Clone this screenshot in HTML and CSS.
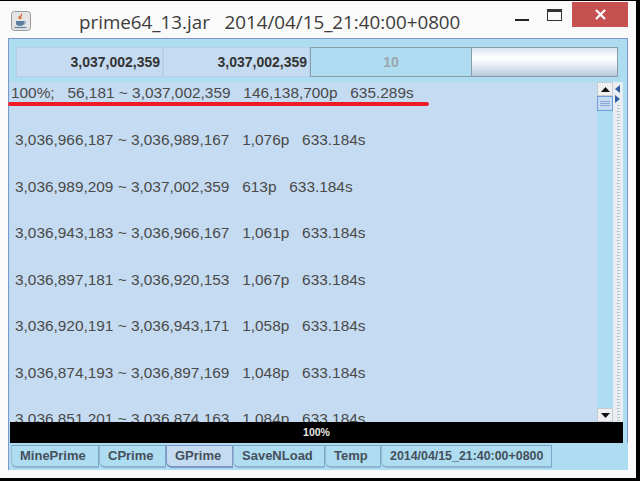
FILE: index.html
```html
<!DOCTYPE html>
<html>
<head>
<meta charset="utf-8">
<title>prime64_13.jar</title>
<link rel="stylesheet" href="styles.css">
</head>
<body>
<div class="window">
  <header class="titlebar">
    <div class="appicon">
      <svg width="20" height="20" viewBox="0 0 20 20">
        <rect x="0.5" y="0.5" width="19" height="19" rx="3" fill="#e4e4e4" stroke="#9a9a9a"/>
        <path d="M10 3c2 2-2 3 0 5M8 5c1 2 0 2 0 3" fill="none" stroke="#d8662a" stroke-width="1.3"/>
        <path d="M5 10h8v2c0 2-1 3-4 3s-4-1-4-3z" fill="#5b7fa0"/>
        <path d="M13 10.500c2 0 2 2.500-.5 2.500" fill="none" stroke="#5b7fa0"/>
        <path d="M3.500 16.500h12" stroke="#5b7fa0" stroke-width="1.200"/>
      </svg>
    </div>
    <div class="title">prime64_13.jar&nbsp;&nbsp;&nbsp;2014/04/15_21:40:00+0800</div>
    <div class="controls">
      <span class="min"></span>
      <span class="max"></span>
      <span class="close">
        <svg width="11" height="11" viewBox="0 0 11 11"><path d="M1 1l9 9M10 1l-9 9" stroke="#fff" stroke-width="2.200"/></svg>
      </span>
    </div>
  </header>
  <main class="pane">
    <div class="toprow">
      <div class="cell num">3,037,002,359</div>
      <div class="cell num">3,037,002,359</div>
      <div class="cell field">10</div>
      <div class="cell button"></div>
    </div>
    <div class="summary">100%;&nbsp;&nbsp;&nbsp;56,181 ~ 3,037,002,359&nbsp;&nbsp;&nbsp;146,138,700p&nbsp;&nbsp;&nbsp;635.289s<span class="redline"></span></div>
    <div class="middle">
      <div class="list">
        <div class="row">3,036,966,187 ~ 3,036,989,167&nbsp;&nbsp;&nbsp;1,076p&nbsp;&nbsp;&nbsp;633.184s</div>
        <div class="row">3,036,989,209 ~ 3,037,002,359&nbsp;&nbsp;&nbsp;613p&nbsp;&nbsp;&nbsp;633.184s</div>
        <div class="row">3,036,943,183 ~ 3,036,966,167&nbsp;&nbsp;&nbsp;1,061p&nbsp;&nbsp;&nbsp;633.184s</div>
        <div class="row">3,036,897,181 ~ 3,036,920,153&nbsp;&nbsp;&nbsp;1,067p&nbsp;&nbsp;&nbsp;633.184s</div>
        <div class="row">3,036,920,191 ~ 3,036,943,171&nbsp;&nbsp;&nbsp;1,058p&nbsp;&nbsp;&nbsp;633.184s</div>
        <div class="row">3,036,874,193 ~ 3,036,897,169&nbsp;&nbsp;&nbsp;1,048p&nbsp;&nbsp;&nbsp;633.184s</div>
        <div class="row">3,036,851,201 ~ 3,036,874,163&nbsp;&nbsp;&nbsp;1,084p&nbsp;&nbsp;&nbsp;633.184s</div>
      </div>
      <div class="scrollbar">
        <div class="sbtn"><svg width="9" height="5" viewBox="0 0 9 5"><path d="M4.500 0L9 5H0z" fill="#111"/></svg></div>
        <div class="thumb"><i></i><i></i><i></i></div>
        <div class="track"></div>
        <div class="sbtn"><svg width="9" height="5" viewBox="0 0 9 5"><path d="M4.500 5L9 0H0z" fill="#111"/></svg></div>
      </div>
      <div class="splitter">
        <svg width="6" height="8" viewBox="0 0 6 8"><path d="M5 0v8L0 4z" fill="#2f5f9e"/></svg>
        <svg width="6" height="8" viewBox="0 0 6 8"><path d="M0 0v8l5-4z" fill="#2f5f9e"/></svg>
        <div class="dots"></div>
      </div>
    </div>
    <div class="progress">100%</div>
  </main>
  <nav class="tabs">
    <div class="tab t1">MinePrime</div>
    <div class="tab t2">CPrime</div>
    <div class="tab t3 active">GPrime</div>
    <div class="tab t4">SaveNLoad</div>
    <div class="tab t5">Temp</div>
    <div class="tab t6">2014/04/15_21:40:00+0800</div>
  </nav>
</div>
</body>
</html>
```
FILE: styles.css
```css
html, body {
  margin: 0;
  padding: 0;
  width: 640px;
  height: 481px;
  overflow: hidden;
  background: #000;
}
.window {
  box-sizing: border-box;
  width: 636px;
  height: 477px;
  margin-top: 1px;
  background: #fafafa;
  padding: 0 8px 8px 8px;
  display: flex;
  flex-direction: column;
  font-family: "Liberation Sans", Arial, sans-serif;
  color: #444;
}
.titlebar {
  height: 37px;
  flex: none;
  display: flex;
  align-items: flex-start;
  position: relative;
}
.appicon {
  margin: 10px 0 0 3px;
  width: 20px;
  height: 20px;
}
.title {
  margin: 8px 0 0 48px;
  font-family: "Open Sans", sans-serif;
  font-size: 18.800px;
  line-height: 26px;
  color: #3c3c3c;
  white-space: nowrap;
}
.controls {
  margin-left: auto;
  display: flex;
  align-items: flex-start;
}
.min {
  width: 14px;
  height: 2px;
  background: #222;
  margin: 18px 18px 0 0;
}
.max {
  box-sizing: border-box;
  width: 15px;
  height: 12px;
  border: 1px solid #333;
  border-top-width: 3px;
  margin: 8px 10px 0 0;
}
.close {
  width: 56px;
  height: 25px;
  background: #c75050;
  margin-top: 1px;
  display: flex;
  align-items: center;
  justify-content: center;
}
.pane {
  flex: none;
  height: 405px;
  box-sizing: border-box;
  border: 1px solid #7d97c9;
  border-bottom: 0;
  background: #aedcf0;
  padding: 8px 4px 0 1px;
  display: flex;
  flex-direction: column;
  width: 620px;
}
.toprow {
  display: flex;
  height: 30px;
  flex: none;
  padding-left: 6px;
  padding-right: 5px;
}
.cell {
  box-sizing: border-box;
  height: 30px;
  font-size: 14px;
  font-weight: 700;
  line-height: 28px;
}
.num {
  width: 147px;
  background: #c5dbf1;
  border: 1px solid #b7d0e8;
  text-align: right;
  padding-right: 2px;
  color: #333;
}
.field {
  width: 162px;
  background: #aedcf0;
  border: 1px solid #8a9aa8;
  text-align: center;
  color: #9aa6ae;
}
.button {
  flex: 1;
  border: 1px solid #8a9aa8;
  border-left: 0;
  background: linear-gradient(#d8e4f0, #ffffff 35%, #e8eff6 60%, #b8cadc);
}
.summary {
  flex: none;
  margin-top: 5px;
  height: 21px;
  background: #c5dbf1;
  font-size: 15.400px;
  line-height: 22px;
  padding-left: 1px;
  color: #4a4a4a;
  white-space: nowrap;
  position: relative;
}
.redline {
  position: absolute;
  left: -2px;
  top: 20px;
  width: 421px;
  height: 4px;
  border-radius: 2px;
  background: #ed1c24;
}
.middle {
  flex: 1;
  min-height: 0;
  display: flex;
  background: #c5dbf1;
}
.list {
  flex: 1;
  overflow: hidden;
  min-width: 0;
  padding: 13px 0 0 5px;
  font-size: 15.400px;
  color: #4a4a4a;
}
.row {
  height: 46.500px;
  line-height: 47px;
  white-space: nowrap;
}
.scrollbar {
  width: 16px;
  display: flex;
  flex-direction: column;
  background: #aedcf0;
  margin-top: -21px;
  position: relative;
}
.sbtn {
  height: 14px;
  flex: none;
  background: #eef0f2;
  border: 1px solid #c8ccd0;
  box-sizing: border-box;
  display: flex;
  align-items: center;
  justify-content: center;
}
.thumb {
  height: 15px;
  flex: none;
  box-sizing: border-box;
  border: 1px solid #6f9fd8;
  background: #c5dbf1;
  display: flex;
  flex-direction: column;
  justify-content: center;
  gap: 1px;
  padding: 0 2px;
}
.thumb i {
  display: block;
  height: 1px;
  background: #8fa8d8;
}
.track {
  flex: 1;
}
.splitter {
  width: 10px;
  background: #e9eef2;
  margin-top: -21px;
  display: flex;
  flex-direction: column;
  align-items: center;
  padding-top: 3px;
  gap: 2px;
  position: relative;
}
.dots {
  flex: 1;
  width: 3px;
  background: repeating-linear-gradient(#b8c0c6 0 1px, transparent 1px 3px);
}
.progress {
  flex: none;
  height: 21px;
  background: #000;
  color: #e8e8e8;
  font-size: 10.500px;
  font-weight: 700;
  text-align: center;
  line-height: 21px;
  position: relative;
}
.tabs {
  flex: 1;
  width: 620px;
  box-sizing: border-box;
  background: #aedcf0;
  border-left: 1px solid #7d97c9;
  display: flex;
  padding: 2px 0 0 2px;
  align-items: flex-start;
}
.tab {
  box-sizing: border-box;
  height: 23px;
  font-size: 13px;
  font-weight: 700;
  line-height: 20px;
  color: #45505c;
  border: 1px solid #7ba6c8;
  border-left-color: #9ab8d0;
  border-bottom: 2px solid #8fb4cf;
  border-bottom-left-radius: 6px;
  background: #aedcf0;
  white-space: nowrap;
  padding-left: 8px;
}
.t1 { width: 88px; }
.t2 { width: 67px; }
.t3 { width: 67px; }
.t4 { width: 92px; }
.t5 { width: 56px; }
.t6 { width: 171px; font-size: 12.400px; }
.tab.active {
  background: #c5dbf1;
  border-color: #7d97c9;
}
```
